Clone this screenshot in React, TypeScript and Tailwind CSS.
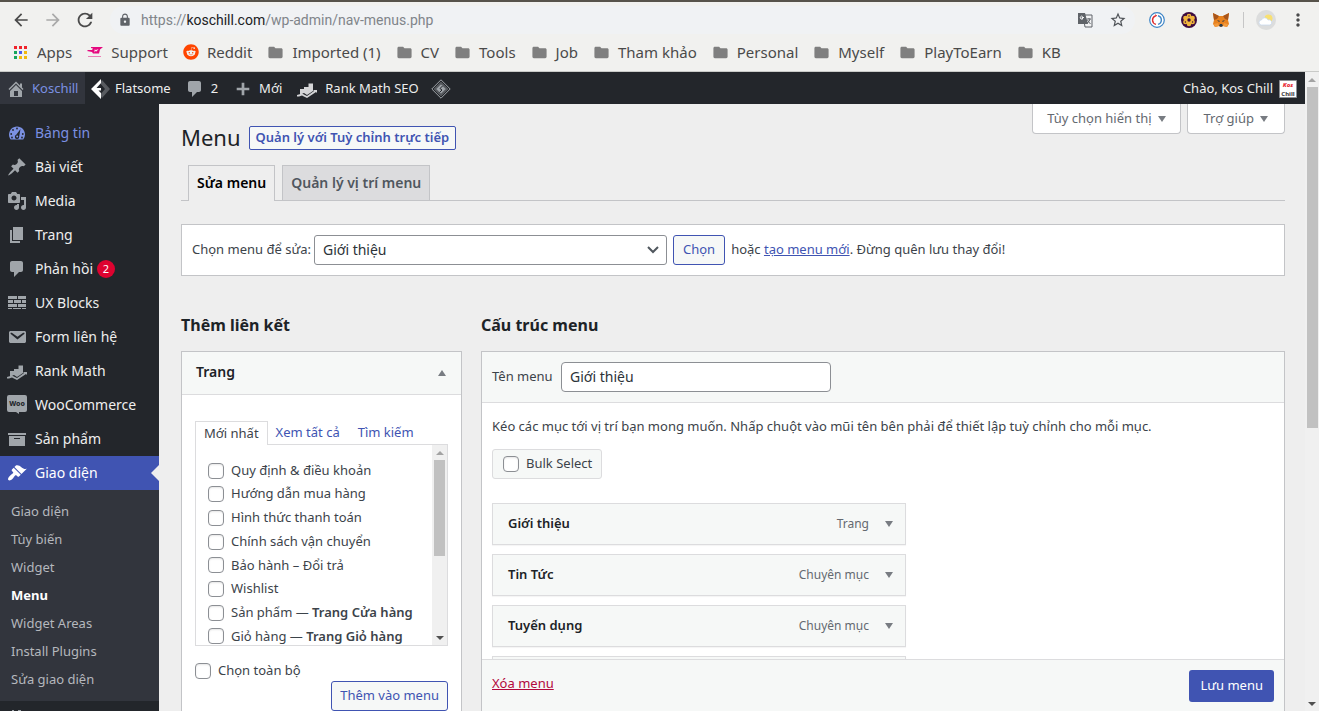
import type { ReactNode } from 'react'
import { FaReddit } from 'react-icons/fa'
import { MdArrowBack, MdArrowForward, MdFolder, MdLock, MdMoreVert, MdRefresh, MdStarBorder } from 'react-icons/md'

const paths = {
  home: 'M16 8.5l1.53 1.53-1.06 1.06L10 4.6l-6.47 6.49-1.06-1.06L10 2.5l4 4v-2h2v4zm-6-2.46l6 5.99V18H4v-5.97zM12 17v-5H8v5h4z',
  comment: 'M5 2h9c1.1 0 2 .9 2 2v7c0 1.1-.9 2-2 2h-2l-5 5v-5H5c-1.1 0-2-.9-2-2V4c0-1.1.9-2 2-2z',
  plus: 'M17 8.5v3h-5.5V17h-3v-5.500H3v-3h5.500V3h3v5.500z',
  pin: 'M10.44 3.02l1.82-1.82 6.36 6.35-1.83 1.82c-1.05-.68-2.48-.57-3.41.36l-.75.75c-.92.93-1.04 2.35-.35 3.41l-1.83 1.82-2.41-2.41-2.8 2.79c-.42.42-3.38 2.71-3.8 2.29s1.86-3.39 2.28-3.81l2.79-2.79L4.1 9.36l1.83-1.82c1.05.69 2.48.57 3.4-.36l.75-.75c.93-.92 1.05-2.35.36-3.41z',
  media: 'M13 11V4c0-.55-.45-1-1-1h-1.67L9 1H5L3.67 3H2c-.55 0-1 .45-1 1v7c0 .55.45 1 1 1h10c.55 0 1-.45 1-1zM7 4.5c1.38 0 2.5 1.12 2.5 2.5S8.38 9.5 7 9.5 4.5 8.38 4.5 7 5.62 4.5 7 4.5zM14 6h5v10.5c0 1.38-1.12 2.5-2.5 2.5S14 17.88 14 16.5s1.12-2.5 2.5-2.5c.17 0 .34.02.5.05V9h-3V6zm-4 8.05V13h2v3.5c0 1.38-1.12 2.5-2.5 2.5S7 17.88 7 16.5 8.12 14 9.5 14c.17 0 .34.02.5.05z',
  page: 'M6 15V2h10v13H6zm-1 1h8v2H3V5h2v11z',
  blocks: 'M1 3h9v3H1zM11 3h8v3h-8zM1 7h5v3H1zM7 7h7v3H7zM15 7h4v3h-4zM1 11h9v3H1zM11 11h8v3h-8zM1 15h4v1H1zM6 15h8v1H6zM15 15h4v1h-4z',
  email: 'M3.87 4h13.25C18.37 4 19 4.59 19 5.79v8.42c0 1.19-.63 1.79-1.88 1.79H3.87c-1.25 0-1.88-.6-1.88-1.79V5.79c0-1.2.63-1.79 1.88-1.79zm6.62 8.6l6.74-5.53c.24-.2.43-.66.13-1.07-.29-.41-.82-.42-1.17-.17l-5.7 3.86L4.8 5.83c-.35-.25-.88-.24-1.17.17-.3.41-.11.87.13 1.07z',
  rank: 'M3 10h4v4l-4 1.500zM7 8h4.500v7l-1.500 1-3-2zM11.500 4.500h4.500V12l-4.500 3zM0 16l5-1.500 5 2.500 7-5-1-1h4v3l-1-1-9 6-5-2.500-3 1H0z',
  archive: 'M19 4v2H1V4h18zM2 7h16v10H2V7zm11 3V9H7v1h6z',
  brush: 'M14.48 11.06L7.41 3.99l1.5-1.5c.5-.56 2.3-.47 3.51.32 1.21.8 1.43 1.28 2.91 2.1 1.18.64 2.45 1.26 4.45.85zm-.71.71L6.7 4.7 4.93 6.47c-.39.39-.39 1.02 0 1.41l1.06 1.06c.39.39.39 1.03 0 1.42-.6.6-1.43 1.11-2.21 1.69-.35.26-.7.53-1.01.84C1.43 14.23.4 16.08 1.4 17.07c.99 1 2.84-.03 4.18-1.36.31-.31.58-.66.85-1.02.57-.78 1.08-1.61 1.69-2.21.39-.39 1.02-.39 1.41 0l1.06 1.06c.39.39 1.02.39 1.41 0z',
  plugin: 'M5 2h2v5H5zM11 2h3v5h-3zM2 7h15v5c0 3-2 5-5 5v3H7v-3c-3 0-5-2-5-5z',
}

const Icon = ({ name, className = 'fill-[#a0a5aa]' }: { name: keyof typeof paths; className?: string }) => (
  <svg viewBox="0 0 20 20" className={`size-5 shrink-0 ${className}`} aria-hidden="true">
    <path d={paths[name]} />
  </svg>
)

const DashboardIcon = () => (
  <svg viewBox="0 0 20 20" className="size-5 shrink-0 fill-[#7b90e2]" aria-hidden="true">
    <path d="M3.76 16.500h12.48A8 8 0 0 0 18 11.500c0-4.420-3.580-8-8-8s-8 3.580-8 8c0 1.920.670 3.670 1.760 5z" />
    <g className="fill-[#23262b]">
      <circle cx="10" cy="5.500" r=".900" />
      <circle cx="6" cy="7" r=".900" />
      <circle cx="4.200" cy="11" r=".900" />
      <circle cx="15.800" cy="11" r=".900" />
      <circle cx="5" cy="14.500" r=".900" />
      <circle cx="15" cy="14.500" r=".900" />
      <path d="M13.500 6l-1.300 7.500a2.200 2.200 0 1 1-3-1.700z" />
    </g>
    <circle cx="10.200" cy="13.500" r="1" />
  </svg>
)

const WooIcon = () => (
  <svg viewBox="0 0 20 20" className="size-5 shrink-0" aria-hidden="true">
    <path d="M2 0h16a2 2 0 0 1 2 2v13a2 2 0 0 1-2 2h-6v2l-3-2H2a2 2 0 0 1-2-2V2a2 2 0 0 1 2-2z" fill="#a0a5aa" />
    <text x="10" y="11" textAnchor="middle" fontSize="7" fontWeight="800" fill="#23262b">Woo</text>
  </svg>
)

const AppsIcon = () => (
  <svg viewBox="0 0 13 13" className="mr-[2px] size-[13px]" aria-hidden="true">
    <path d="M0 0h3v3H0zM5 0h3v3H5zM10 0h3v3h-3z" fill="#f0232b" />
    <path d="M0 5h3v3H0zM0 10h3v3H0z" fill="#17a45c" />
    <path d="M5 5h3v3H5z" fill="#4c5bf0" />
    <path d="M10 5h3v3h-3zM5 10h3v3H5zM10 10h3v3h-3z" fill="#f2b90f" />
  </svg>
)

const SupportIcon = () => (
  <svg viewBox="0 0 16 12" className="h-3 w-4" aria-hidden="true" fill="#e5097f">
    <path d="M4 1h12l-3 2.500-1 4H6l-1-1.500-5-1 1-1h4l1-1.500-2-.500zM7.500 3.500v3l1-1.500 1 .5 2-2.500-2.500 1z" fillRule="evenodd" />
    <path d="M1 10h13v1H1z" opacity=".5" />
  </svg>
)

const TranslateIcon = () => (
  <svg viewBox="0 0 16 16" className="size-4" aria-hidden="true">
    <path d="M6 3h9v12H8z" fill="#f1f2f3" stroke="#5f6368" />
    <path d="M1 1h7l3 11H1z" fill="#5f6368" />
    <path d="M7 5.500H5v1h1a1.500 1.500 0 1 1-.300-2" fill="none" stroke="#f1f2f3" />
    <path d="M9.500 7h4.500M12 6v1m1 0q-.500 3-3 4m.500-3q1 2 3 4" fill="none" stroke="#5f6368" />
  </svg>
)

const RingIcon = () => (
  <svg viewBox="0 0 16 16" className="size-4" fill="none" aria-hidden="true">
    <circle cx="8" cy="8" r="7.300" stroke="#3d85c6" strokeWidth="1.200" fill="#fff" />
    <path d="M9 3.700a4.500 4.500 0 0 1 0 8.700" stroke="#3d85c6" strokeWidth="1.400" />
    <path d="M6.500 3.800a4.500 4.500 0 0 0 .500 8.600" stroke="#e02b2b" strokeWidth="1.400" />
    <path d="M6 2.200l2.200 1.300L6.500 5z" fill="#e02b2b" />
  </svg>
)

const FlowerIcon = () => (
  <svg viewBox="0 0 16 16" className="size-4" aria-hidden="true">
    <circle cx="8" cy="8" r="8" fill="#3d0b3f" />
    <g fill="#f0b53c">
      <circle cx="8" cy="4" r="2.300" />
      <circle cx="11.600" cy="6" r="2.300" />
      <circle cx="11.600" cy="10" r="2.300" />
      <circle cx="8" cy="12" r="2.300" />
      <circle cx="4.400" cy="10" r="2.300" />
      <circle cx="4.400" cy="6" r="2.300" />
      <circle cx="8" cy="8" r="4" />
    </g>
    <circle cx="8" cy="8" r="1.700" fill="#3d0b3f" />
    <g fill="#3d0b3f">
      <circle cx="8" cy="4" r=".700" />
      <circle cx="11.600" cy="10" r=".700" />
      <circle cx="4.400" cy="10" r=".700" />
    </g>
  </svg>
)

const FoxIcon = () => (
  <svg viewBox="0 0 16 16" className="size-4" aria-hidden="true">
    <path d="M0 1l6 3h4l6-3-1 7 1 4-2 3-4-1-2 1-2-1-4 1-2-3 1-4z" fill="#e8821e" />
    <path d="M0 1l6 3-2 3-3 1zM16 1l-6 3 2 3 3 1z" fill="#a9561b" />
    <path d="M4 8l3 1-1 1zM12 8L9 9l1 1zM7 12h2l1 2-2 1-2-1z" fill="#2b3b4a" />
    <path d="M1 12l4-1 1 3-4 1zM15 12l-4-1-1 3 4 1z" fill="#f39a3c" />
  </svg>
)

const WeatherIcon = () => (
  <svg viewBox="0 0 20 20" className="size-5" aria-hidden="true">
    <circle cx="10" cy="10" r="10" fill="#dcdddd" />
    <circle cx="12.500" cy="8.500" r="4" fill="#f8e071" />
    <path d="M5.500 15a2.500 2.500 0 0 1 0-5 3.500 3.500 0 0 1 6.500 0 2.500 2.500 0 0 1 2 5z" fill="#fff" stroke="#c4d7ee" strokeWidth=".700" />
  </svg>
)

const FlatsomeIcon = () => (
  <svg viewBox="0 0 20 20" className="size-5" aria-hidden="true">
    <path d="M11 1l8 9-8 9-2-3 5-6-5-6z" fill="#585b60" />
    <path d="M10 0v4L5.500 9H10v2.500H7.500L10 14v6L0 10z" fill="#fff" />
  </svg>
)

const DiamondIcon = () => (
  <svg viewBox="0 0 20 20" className="size-5" fill="none" stroke="#a0a5aa" aria-hidden="true">
    <path d="M10 .800l9.200 9.200-9.200 9.200L.800 10z" />
    <path d="M10 3.500l6.500 6.500-6.500 6.500L3.500 10z" strokeWidth=".800" />
    <path d="M10 5.500l4.500 4.500-4.500 4.500L5.500 10z" fill="#a0a5aa" />
    <path d="M11.500 7L9 9.500l2 1.500-2.500 2.500" stroke="#23262b" />
  </svg>
)

const Triangle = ({ up = false, className = 'h-[6px] fill-[#787c82]' }: { up?: boolean; className?: string }) => (
  <svg viewBox="0 0 8 6" preserveAspectRatio="none" className={`w-2 shrink-0 ${className}`} aria-hidden="true">
    <path d={up ? 'M0 6h8L4 0z' : 'M0 0h8L4 6z'} />
  </svg>
)

const bookmarks = ['Imported (1)', 'CV', 'Tools', 'Job', 'Tham khảo', 'Personal', 'Myself', 'PlayToEarn', 'KB']

const Bookmark = ({ icon, label }: { icon: ReactNode; label: string }) => (
  <a href="#" className="flex items-center gap-2 whitespace-nowrap">
    {icon}
    <span>{label}</span>
  </a>
)

const Browser = () => (
  <header className="h-[72px] shrink-0 border-t-2 border-b border-t-[#57534b] border-b-[#c9cac8] bg-[#f1f1ef] text-[#4a4a4a]">
    <div className="flex h-9 items-center px-[11px]">
      <button aria-label="Back"><MdArrowBack className="size-5" /></button>
      <button aria-label="Forward" className="ml-3 text-[#a9a9a9]"><MdArrowForward className="size-5" /></button>
      <button aria-label="Reload" className="ml-[11px]"><MdRefresh className="size-[22px]" /></button>
      <div className="ml-[14px] flex h-7 flex-1 items-center rounded-full bg-[#f0f2f4] px-2">
        <MdLock className="size-[14px] text-[#5f6368]" />
        <span className="ml-[9px] flex-1 font-['Roboto','Noto_Sans',sans-serif] text-[14px] text-[#80858a]">
          https://<span className="text-[#202124]">koschill.com</span>/wp-admin/nav-menus.php
        </span>
        <button aria-label="Translate" className="mr-4"><TranslateIcon /></button>
        <button aria-label="Bookmark this tab"><MdStarBorder className="size-[18px] text-[#4f5358]" /></button>
      </div>
      <div className="ml-[14px] flex items-center gap-4">
        <RingIcon />
        <FlowerIcon />
        <FoxIcon />
        <span className="-ml-[2px] h-4 w-px bg-[#c6c6c6]" />
      </div>
      <div className="ml-3 flex items-center gap-3">
        <WeatherIcon />
        <button aria-label="Browser menu"><MdMoreVert className="size-5" /></button>
      </div>
    </div>
    <nav className="flex h-7 items-center gap-[15px] overflow-hidden px-[14px] text-[15px]">
      <Bookmark icon={<AppsIcon />} label="Apps" />
      <Bookmark icon={<SupportIcon />} label="Support" />
      <Bookmark icon={<FaReddit className="size-4 text-[#ff4500]" />} label="Reddit" />
      {bookmarks.map((b) => (
        <Bookmark key={b} icon={<MdFolder className="size-[17px] text-[#7f7f7f]" />} label={b} />
      ))}
    </nav>
  </header>
)

const barItem = 'flex h-8 items-center pt-[2px]'

const AdminBar = () => (
  <div className="flex h-8 shrink-0 items-center bg-[#23262b] text-[13px] whitespace-nowrap text-[#eee]">
    <a href="#" className={`${barItem} w-[85px] gap-[6px] bg-[#32353d] pl-[6px] text-[#7b90e2]`}>
      <Icon name="home" />
      Koschill
    </a>
    <a href="#" className={`${barItem} gap-1 pl-[6px]`}>
      <FlatsomeIcon />
      Flatsome
    </a>
    <a href="#" className={`${barItem} gap-[6px] pl-[14px]`}>
      <Icon name="comment" />
      2
    </a>
    <a href="#" className={`${barItem} gap-[6px] pl-[15px]`}>
      <Icon name="plus" className="fill-[#a0a5aa] p-px" />
      Mới
    </a>
    <a href="#" className={`${barItem} gap-2 pl-[15px]`}>
      <Icon name="rank" className="fill-[#d5d6d8]" />
      Rank Math SEO
    </a>
    <a href="#" aria-label="Cache" className={`${barItem} pl-3`}><DiamondIcon /></a>
    <a href="#" className={`${barItem} mr-2 ml-auto gap-[6px]`}>
      Chào, Kos Chill
      <svg viewBox="0 0 18 18" className="size-[18px]" role="img" aria-label="Kos Chill">
        <path d="M.5.5h17v17H.5z" fill="#fff" stroke="#8c8f94" />
        <text x="9" y="7" textAnchor="middle" fontSize="6" fontWeight="800" fontStyle="italic" fill="#e8252f">Kos</text>
        <text x="9" y="16" textAnchor="middle" fontSize="6" fontWeight="800" fill="#444">Chill</text>
      </svg>
    </a>
  </div>
)

const menu: { label: string; icon: ReactNode; badge?: number; state?: 'hover' | 'current' }[] = [
  { label: 'Bảng tin', icon: <DashboardIcon />, state: 'hover' },
  { label: 'Bài viết', icon: <Icon name="pin" /> },
  { label: 'Media', icon: <Icon name="media" /> },
  { label: 'Trang', icon: <Icon name="page" /> },
  { label: 'Phản hồi', icon: <Icon name="comment" />, badge: 2 },
  { label: 'UX Blocks', icon: <Icon name="blocks" /> },
  { label: 'Form liên hệ', icon: <Icon name="email" /> },
  { label: 'Rank Math', icon: <Icon name="rank" /> },
  { label: 'WooCommerce', icon: <WooIcon /> },
  { label: 'Sản phẩm', icon: <Icon name="archive" /> },
  { label: 'Giao diện', icon: <Icon name="brush" className="fill-white" />, state: 'current' },
]

const submenu = ['Giao diện', 'Tùy biến', 'Widget', 'Menu', 'Widget Areas', 'Install Plugins', 'Sửa giao diện']

const colours = { normal: 'text-[#eee]', hover: 'text-[#7b90e2]', current: 'bg-[#4054b2] text-white' }

const Sidebar = () => (
  <nav className="w-[159px] shrink-0 overflow-hidden bg-[#23262b] pt-3 text-[14px] whitespace-nowrap">
    {menu.map(({ label, icon, badge, state = 'normal' }) => (
      <a key={label} href="#" className={`relative flex h-[34px] items-center gap-2 pl-[7px] ${colours[state]}`}>
        {icon}
        <span className="pb-[2px]">{label}</span>
        {badge && (
          <span className="-ml-1 flex size-[18px] items-center justify-center rounded-full bg-[#dd0330] text-[11px] text-white">{badge}</span>
        )}
        {state === 'current' && (
          <span className="absolute top-[9px] right-0 border-y-8 border-r-8 border-y-transparent border-r-[#eee]" />
        )}
      </a>
    ))}
    <ul className="bg-[#32353d] pt-2 pb-[7px] text-[13px] text-[#b5b8bd]">
      {submenu.map((s) => (
        <li key={s}>
          <a href="#" className={`flex h-7 items-center pl-[11px] ${s === 'Menu' ? 'font-bold text-white' : ''}`}>{s}</a>
        </li>
      ))}
    </ul>
    <a href="#" aria-label="Plugin" className="flex h-[34px] items-center pl-[7px]"><Icon name="plugin" /></a>
  </nav>
)

const ScrollBar = ({ page = false }: { page?: boolean }) => (
  <div className={`flex shrink-0 flex-col items-center bg-[#f0f0f0] ${page ? 'w-[14px]' : 'w-[15px]'}`}>
    <div className="flex h-[15px] items-center"><Triangle up className="h-1 fill-[#a3a3a3]" /></div>
    <div className={`w-[11px] bg-[#c1c1c1] ${page ? 'h-[341px]' : 'h-24'}`} />
    <div className="mt-auto flex h-[15px] items-center"><Triangle className="h-1 fill-[#505050]" /></div>
  </div>
)

const box = 'size-4 shrink-0 appearance-none rounded-[4px] border border-[#8c8f94] bg-white shadow-[inset_0_1px_2px_rgba(0,0,0,0.1)]'
const heading = 'h-[51px] shrink-0 pt-[13px] text-[16px] leading-6 font-bold text-[#1d2327]'

const pages: { label: string; note?: string }[] = [
  { label: 'Quy định & điều khoản' },
  { label: 'Hướng dẫn mua hàng' },
  { label: 'Hình thức thanh toán' },
  { label: 'Chính sách vận chuyển' },
  { label: 'Bảo hành – Đổi trả' },
  { label: 'Wishlist' },
  { label: 'Sản phẩm', note: 'Trang Cửa hàng' },
  { label: 'Giỏ hàng', note: 'Trang Giỏ hàng' },
]

const AddLinks = () => (
  <section className="flex w-[281px] shrink-0 flex-col">
    <h2 className={heading}>Thêm liên kết</h2>
    <div className="shrink-0 border border-[#c3c4c7] bg-white">
      <h3 className="flex h-[43px] items-center justify-between border-b border-[#dcdcde] bg-[#f6f8f7] pr-[15px] pl-[14px] text-[14px] font-semibold text-[#1d2327]">
        <span className="pb-1">Trang</span>
        <Triangle up />
      </h3>
      <div className="px-[13px] pt-[26px]">
        <div className="flex h-[23px] text-[13px] text-[#4054b2]">
          <button className="z-10 -mb-px h-6 border border-b-0 border-[#dcdcde] bg-white px-2 text-[#3c434a]">Mới nhất</button>
          <button className="px-2">Xem tất cả</button>
          <button className="px-[10px]">Tìm kiếm</button>
        </div>
        <div className="flex h-[202px] overflow-hidden border border-[#dcdcde]">
          <ul className="mt-[14px] flex h-[189px] flex-1 flex-col justify-between pl-3 whitespace-nowrap">
            {pages.map(({ label, note }) => (
              <li key={label} className="h-[23px]">
                <label className="flex h-full items-center gap-[7px]">
                  <input type="checkbox" className={box} />
                  <span>{label}{note && <> — <span className="font-semibold">{note}</span></>}</span>
                </label>
              </li>
            ))}
          </ul>
          <ScrollBar />
        </div>
        <label className="mt-[15px] flex h-5 items-center gap-[7px]">
          <input type="checkbox" className={box} />
          Chọn toàn bộ
        </label>
        <button className="ml-auto block h-[30px] rounded-[3px] border border-[#4054b2] bg-[#f6f8f7] px-2 text-[#4054b2]">Thêm vào menu</button>
      </div>
      <div className="h-12" />
    </div>
  </section>
)

const items = [
  { title: 'Giới thiệu', type: 'Trang' },
  { title: 'Tin Tức', type: 'Chuyên mục' },
  { title: 'Tuyển dụng', type: 'Chuyên mục' },
]

const itemBox = 'border border-[#dcdcde] bg-[#f6f8f7] shadow-[0_1px_1px_rgba(0,0,0,0.04)]'

const Structure = () => (
  <section className="flex min-w-0 flex-1 flex-col">
    <h2 className={heading}>Cấu trúc menu</h2>
    <div className="flex min-h-0 flex-1 flex-col border border-b-0 border-[#c3c4c7] bg-white">
      <div className="flex h-[51px] shrink-0 items-center border-b border-[#dcdcde] bg-[#f6f8f7] pl-[10px]">
        <label htmlFor="menu-name" className="w-[69px]">Tên menu</label>
        <input id="menu-name" defaultValue="Giới thiệu" className="h-[30px] w-[270px] rounded-[4px] border border-[#8c8f94] bg-white px-2 pb-[2px] text-[14px] text-[#2c3338]" />
      </div>
      <div className="min-h-0 flex-1 overflow-hidden px-[10px] pt-[13px]">
        <p className="leading-5">Kéo các mục tới vị trí bạn mong muốn. Nhấp chuột vào mũi tên bên phải để thiết lập tuỳ chỉnh cho mỗi mục.</p>
        <label className="mt-[13px] flex h-[30px] w-[110px] items-center gap-[7px] rounded-[3px] border border-[#dcdcde] bg-[#f6f8f7] pl-[10px] whitespace-nowrap">
          <input type="checkbox" className={box} />
          Bulk Select
        </label>
        <ul className="mt-6 flex w-[414px] flex-col gap-[9px]">
          {items.map(({ title, type }) => (
            <li key={title} className={`flex h-[42px] items-center pr-3 pl-[15px] ${itemBox}`}>
              <span className="font-semibold text-[#1d2327]">{title}</span>
              <span className="ml-auto text-[12px] text-[#646970]">{type}</span>
              <button aria-label="Mở" className="ml-4 w-2"><Triangle /></button>
            </li>
          ))}
          <li className={`h-[42px] ${itemBox}`} />
        </ul>
      </div>
      <div className="flex h-[52px] shrink-0 items-center justify-between border-t border-[#dcdcde] bg-[#f6f8f7] px-[10px]">
        <a href="#" className="pb-1 text-[#b3093c] underline">Xóa menu</a>
        <button className="h-8 rounded-[3px] bg-[#4054b2] px-[11px] text-white">Lưu menu</button>
      </div>
    </div>
  </section>
)

const metaTab = 'flex h-[30px] items-center gap-[6px] rounded-b-[4px] border border-t-0 border-[#c3c4c7] bg-white pt-px text-[#646970]'

const App = () => {
  return (
    <div className="flex h-screen flex-col overflow-hidden bg-[#eee] font-['Noto_Sans','Open_Sans',sans-serif] text-[13px] text-[#3c434a]">
      <Browser />
      <div className="flex min-h-0 flex-1">
        <div className="flex min-w-0 flex-1 flex-col">
          <AdminBar />
          <div className="flex min-h-0 flex-1">
            <Sidebar />
            <main className="flex min-w-0 flex-1 flex-col pr-5 pl-[22px]">
              <div className="flex h-[61px] shrink-0 items-start whitespace-nowrap">
                <h1 className="mt-[17px] text-[22px] leading-8 text-[#1d2327]">Menu</h1>
                <a href="#" className="mt-[22px] ml-2 flex h-6 items-center rounded-[2px] border border-[#4054b2] bg-[#f6f8f7] px-[6px] font-semibold text-[#4054b2]">
                  Quản lý với Tuỳ chỉnh trực tiếp
                </a>
                <div className="ml-auto flex gap-[6px]">
                  <button className={`${metaTab} px-[14px]`}>Tùy chọn hiển thị <Triangle /></button>
                  <button className={`${metaTab} px-4`}>Trợ giúp <Triangle /></button>
                </div>
              </div>
              <nav className="flex h-9 shrink-0 gap-[7px] border-b border-[#c3c4c7] pl-[7px] text-[14px] font-semibold whitespace-nowrap">
                <a href="#" className="-mb-px flex items-center border border-b-0 border-[#c3c4c7] bg-[#eee] px-2 pb-[2px] text-black">Sửa menu</a>
                <a href="#" className="flex items-center border border-b-0 border-[#c3c4c7] bg-[#dcdcde] px-2 pb-px text-[#50575e]">Quản lý vị trí menu</a>
              </nav>
              <div className="mt-[23px] flex h-[52px] shrink-0 items-center border border-[#c3c4c7] bg-white px-[10px] whitespace-nowrap">
                <label htmlFor="menu-select">Chọn menu để sửa:</label>
                <div className="relative mr-[6px] ml-[3px] w-[353px]">
                  <select id="menu-select" className="h-[30px] w-full appearance-none rounded-[3px] border border-[#8c8f94] bg-white px-2 pb-[2px] text-[14px] text-[#2c3338]">
                    <option>Giới thiệu</option>
                  </select>
                  <svg viewBox="0 0 12 8" className="pointer-events-none absolute top-[11px] right-2 h-2 w-3" fill="none" stroke="#50575e" strokeWidth="2" aria-hidden="true">
                    <path d="M1 1l5 5 5-5" />
                  </svg>
                </div>
                <button className="mr-[6px] h-[30px] rounded-[3px] border border-[#4054b2] bg-[#f6f8f7] px-[9px] text-[#4054b2]">Chọn</button>
                <span>hoặc <a href="#" className="text-[#4054b2] underline">tạo menu mới</a>. Đừng quên lưu thay đổi!</span>
              </div>
              <div className="mt-6 flex min-h-0 flex-1 gap-[19px]">
                <AddLinks />
                <Structure />
              </div>
            </main>
          </div>
        </div>
        <ScrollBar page />
      </div>
    </div>
  )
}

export default App
